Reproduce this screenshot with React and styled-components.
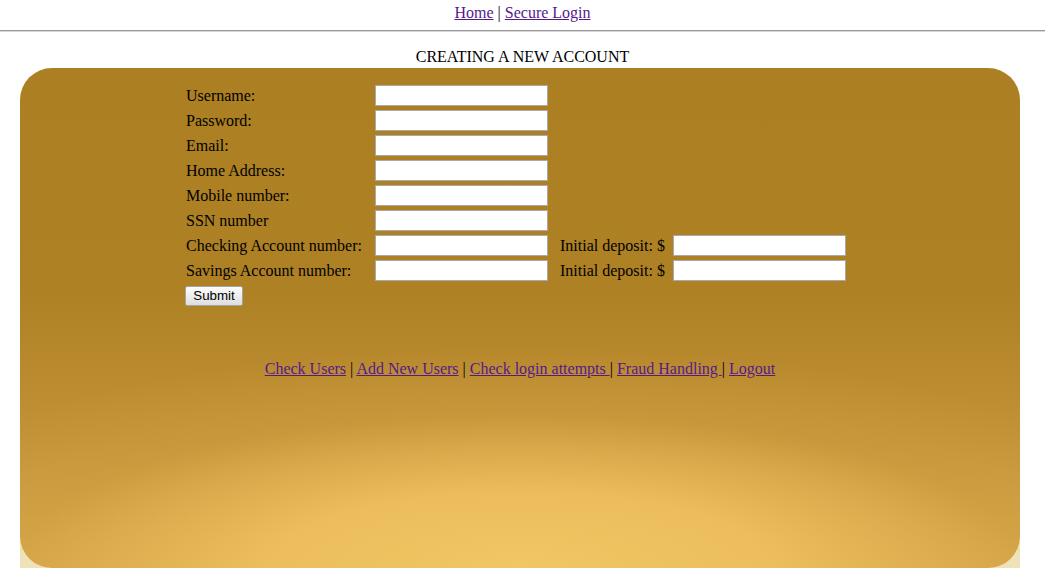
import React from 'react';
import styled, { createGlobalStyle } from 'styled-components';

const GlobalStyle = createGlobalStyle`
    body {
        margin: 0;
        font-family: "Liberation Serif", "Times New Roman", serif;
        font-size: 16px;
        color: #000;
        background: #fff;
    }
`;

const fields = [
    'Username:',
    'Password:',
    'Email:',
    'Home Address:',
    'Mobile number:',
    'SSN number',
];

const accounts = ['Checking Account number:', 'Savings Account number:'];

const adminLinks = [
    'Check Users',
    'Add New Users',
    'Check login attempts ',
    'Fraud Handling ',
    'Logout',
];

const App = () => {
    return (
        <Page>
            <GlobalStyle />
            <TopNav>
                <NavLink href="#">Home</NavLink> | <NavLink href="#">Secure Login</NavLink>
            </TopNav>
            <Rule />
            <Title>CREATING A NEW ACCOUNT</Title>
            <PanelBack>
                <Panel>
                    <Form onSubmit={(e) => e.preventDefault()}>
                        {fields.map((label) => (
                            <React.Fragment key={label}>
                                <Label>{label}</Label>
                                <Input type="text" />
                                <span />
                            </React.Fragment>
                        ))}
                        {accounts.map((label) => (
                            <React.Fragment key={label}>
                                <Label>{label}</Label>
                                <Input type="text" />
                                <Deposit>
                                    <Label>Initial deposit: $</Label>
                                    <Input type="text" />
                                </Deposit>
                            </React.Fragment>
                        ))}
                        <SubmitButton type="submit">Submit</SubmitButton>
                    </Form>
                    <AdminLinks>
                        {adminLinks.map((text, i) => (
                            <React.Fragment key={text}>
                                {i > 0 && (adminLinks[i - 1].endsWith(' ') ? '| ' : ' | ')}
                                <NavLink href="#">{text}</NavLink>
                            </React.Fragment>
                        ))}
                    </AdminLinks>
                </Panel>
            </PanelBack>
        </Page>
    );
};

const Page = styled.div`
    width: 1045px;
`;

const TopNav = styled.div`
    text-align: center;
    padding-top: 3px;
    line-height: 19px;
`;

const NavLink = styled.a`
    color: #551a8b;
    text-decoration: underline;
    white-space: pre;
`;

const Rule = styled.hr`
    margin: 8px 0 0;
    border: none;
    border-top: 1px solid #9a9a9a;
    border-bottom: 1px solid #d6d6d6;
    height: 0;
`;

const Title = styled.div`
    text-align: center;
    padding-top: 15px;
    height: 21px;
    line-height: 19px;
`;

const PanelBack = styled.div`
    margin-left: 20px;
    width: 1000px;
    background: linear-gradient(#fff 50%, #f0e2b8 50%);
`;

const Panel = styled.div`
    height: 500px;
    box-sizing: border-box;
    padding: 17px 0 0 165px;
    border-radius: 32px;
    background:
        radial-gradient(ellipse 72% 44% at 50% 100%, rgba(242, 198, 100, 1) 0%, rgba(238, 192, 94, 0.9) 35%, rgba(210, 160, 65, 0.45) 70%, rgba(180, 134, 40, 0) 100%),
        linear-gradient(#ab7f22 0%, #ae8124 45%, #c39238 75%, #d9aa4e 100%);
`;

const Form = styled.form`
    display: grid;
    grid-template-columns: 190px 173px 298px;
    grid-auto-rows: 21px;
    row-gap: 4px;
    align-items: center;
`;

const Label = styled.span`
    padding-left: 1px;
    line-height: 19px;
    white-space: nowrap;
`;

const Input = styled.input`
    box-sizing: border-box;
    width: 173px;
    height: 21px;
    margin: 0;
    border: 1px solid #a9a9a9;
    background: #fff;
    padding: 1px 2px;
    font-size: 13px;
`;

const Deposit = styled.div`
    display: grid;
    grid-template-columns: 114px 173px;
    align-items: center;
    padding-left: 11px;
`;

const SubmitButton = styled.button`
    justify-self: start;
    width: 58px;
    height: 20px;
    padding: 0;
    margin: 0;
    font-family: "Liberation Sans", Arial, sans-serif;
    font-size: 13.33px;
    color: #000;
    border: 1px solid #a3a3a3;
    border-radius: 2px;
    background: linear-gradient(#fcfcfc, #dedede);
`;

const AdminLinks = styled.div`
    margin: 53px 0 0 -165px;
    text-align: center;
    line-height: 19px;
`;

export default App;
